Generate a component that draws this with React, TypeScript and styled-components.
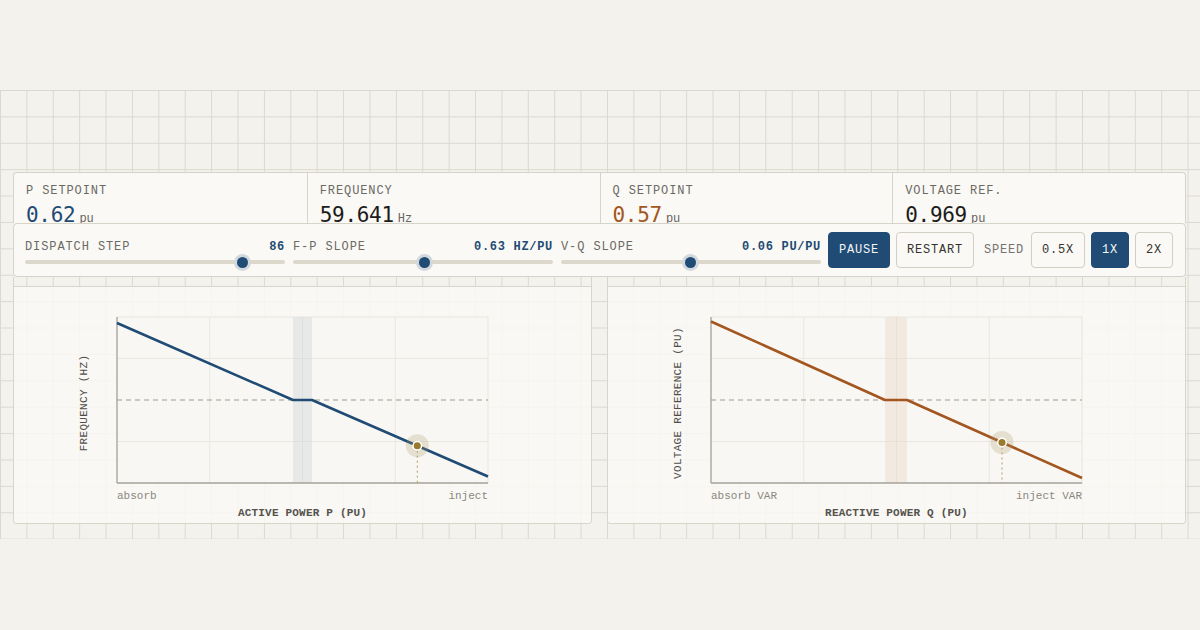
import styled, { createGlobalStyle } from "styled-components";

const ink = "#1f4b74";
const rust = "#a3561f";
const mono = `"Liberation Mono", "DejaVu Sans Mono", monospace`;
const monoHeavy = `"DejaVu Sans Mono", "Liberation Mono", monospace`;

const GlobalStyle = createGlobalStyle`
  html, body {
    margin: 0;
    background: #f3f2ed;
  }
  body {
    font-family: ${mono};
    color: #222;
  }
`;

type Tone = "p" | "q" | "plain";

const stats: { label: string; value: string; unit: string; tone: Tone }[] = [
  { label: "P SETPOINT", value: "0.62", unit: "pu", tone: "p" },
  { label: "FREQUENCY", value: "59.641", unit: "Hz", tone: "plain" },
  { label: "Q SETPOINT", value: "0.57", unit: "pu", tone: "q" },
  { label: "VOLTAGE REF.", value: "0.969", unit: "pu", tone: "plain" },
];

const sliders = [
  { label: "DISPATCH STEP", value: "86", pos: 0.86 },
  { label: "F-P SLOPE", value: "0.63 HZ/PU", pos: 0.508 },
  { label: "V-Q SLOPE", value: "0.06 PU/PU", pos: 0.496 },
];

const speeds = [
  { label: "0.5X", active: false },
  { label: "1X", active: true },
  { label: "2X", active: false },
];

// plot frame inside each chart card
const X0 = 103;
const X1 = 474;
const Y0 = 30;
const Y1 = 196;

type Pt = [number, number];

type ChartProps = {
  color: string;
  bandFill: string;
  band: [number, number];
  pts: Pt[];
  op: Pt;
  yLabel: string;
  xLabel: string;
  lo: string;
  hi: string;
};

function DroopChart({ color, bandFill, band, pts, op, yLabel, xLabel, lo, hi }: ChartProps) {
  const w = X1 - X0;
  const h = Y1 - Y0;
  const mid = Y0 + h / 2;
  return (
    <svg width="577" height="236" viewBox="0 0 577 236">
      <rect x={X0} y={Y0} width={w} height={h} fill="#f8f7f3" stroke="#e8e6df" />
      {[1, 2, 3].map((k) => (
        <line key={"v" + k} x1={X0 + (w * k) / 4} x2={X0 + (w * k) / 4} y1={Y0} y2={Y1} stroke="#e9e7e0" />
      ))}
      {[1, 3].map((k) => (
        <line key={"h" + k} x1={X0} x2={X1} y1={Y0 + (h * k) / 4} y2={Y0 + (h * k) / 4} stroke="#e9e7e0" />
      ))}
      <rect x={band[0]} y={Y0} width={band[1] - band[0]} height={h} fill={bandFill} />
      <line x1={X0} x2={X1} y1={mid} y2={mid} stroke="#9d998f" strokeDasharray="5 4" />
      <line x1={X0} x2={X0} y1={Y0} y2={Y1} stroke="#a9a59b" strokeWidth="1.3" />
      <line x1={X0} x2={X1} y1={Y1} y2={Y1} stroke="#a9a59b" strokeWidth="1.3" />
      <polyline
        points={pts.map((p) => p.join(",")).join(" ")}
        fill="none"
        stroke={color}
        strokeWidth="2.6"
        strokeLinejoin="round"
      />
      <line x1={op[0]} x2={op[0]} y1={op[1] + 5} y2={Y1} stroke="#b39d5f" strokeDasharray="2 3" />
      <circle cx={op[0]} cy={op[1]} r="11.5" fill="rgba(170, 150, 105, 0.25)" />
      <circle cx={op[0]} cy={op[1]} r="4.3" fill="#9a7a2c" stroke="#fff" strokeWidth="1.5" />
      <text
        transform={`translate(70 ${mid + 3}) rotate(-90)`}
        textAnchor="middle"
        dominantBaseline="central"
        fontFamily={mono}
        fontSize="11"
        letterSpacing="0.3"
        fill="#4f4d48"
      >
        {yLabel}
      </text>
      <text x={X0} y="212" fontFamily={mono} fontSize="11" fill="#8a877f">
        {lo}
      </text>
      <text x={X1} y="212" textAnchor="end" fontFamily={mono} fontSize="11" fill="#8a877f">
        {hi}
      </text>
      <text
        x={(X0 + X1) / 2}
        y="228.5"
        textAnchor="middle"
        fontFamily={mono}
        fontSize="11"
        fontWeight="bold"
        letterSpacing="0.2"
        fill="#55534d"
      >
        {xLabel}
      </text>
    </svg>
  );
}

export default function App() {
  return (
    <>
      <GlobalStyle />
      <Board>
        <StatStrip>
          {stats.map((s) => (
            <StatCell key={s.label}>
              <SmallCaps>{s.label}</SmallCaps>
              <Reading>
                <Value $tone={s.tone}>{s.value}</Value>
                <Unit>{s.unit}</Unit>
              </Reading>
            </StatCell>
          ))}
        </StatStrip>

        <ControlBar>
          <SliderSet>
            {sliders.map((s) => (
              <SliderGroup key={s.label}>
                <SliderHead>
                  <SmallCaps>{s.label}</SmallCaps>
                  <SliderValue>{s.value}</SliderValue>
                </SliderHead>
                <TrackWrap>
                  <Track />
                  <Thumb style={{ left: 8 + s.pos * 244 - 5.5 }} />
                </TrackWrap>
              </SliderGroup>
            ))}
          </SliderSet>
          <Button $active>PAUSE</Button>
          <Button>RESTART</Button>
          <SpeedLabel>SPEED</SpeedLabel>
          {speeds.map((s) => (
            <Button key={s.label} $active={s.active}>
              {s.label}
            </Button>
          ))}
        </ControlBar>

        <ChartRow>
          <ChartCard>
            <CardHead />
            <CardBody>
              <DroopChart
                color={ink}
                bandFill="rgba(210, 214, 219, 0.45)"
                band={[279, 298]}
                pts={[
                  [X0, 36],
                  [279, 113],
                  [298, 113],
                  [X1, 189.5],
                ]}
                op={[403.3, 158.7]}
                yLabel="FREQUENCY (HZ)"
                xLabel="ACTIVE POWER P (PU)"
                lo="absorb"
                hi="inject"
              />
            </CardBody>
          </ChartCard>
          <ChartCard>
            <CardHead />
            <CardBody>
              <DroopChart
                color={rust}
                bandFill="rgba(232, 212, 198, 0.4)"
                band={[277, 299]}
                pts={[
                  [X0, 34.5],
                  [277, 113],
                  [299, 113],
                  [X1, 191],
                ]}
                op={[394, 155.5]}
                yLabel="VOLTAGE REFERENCE (PU)"
                xLabel="REACTIVE POWER Q (PU)"
                lo="absorb VAR"
                hi="inject VAR"
              />
            </CardBody>
          </ChartCard>
        </ChartRow>
      </Board>
    </>
  );
}

const Board = styled.main`
  margin-top: 90px;
  height: 449px;
  box-sizing: border-box;
  padding: 82px 14px 0 13px;
  background-color: #f3f2ed;
  background-image: linear-gradient(to right, #dbd8cf 1px, transparent 1px),
    linear-gradient(to bottom, #dbd8cf 1px, transparent 1px);
  background-size: 26.4px 26.4px;
`;

const StatStrip = styled.section`
  display: grid;
  grid-template-columns: repeat(4, 1fr);
  height: 51px;
  box-sizing: border-box;
  overflow: hidden;
  background: #faf9f5;
  border: 1px solid #d6d3c9;
  border-bottom: none;
  border-radius: 4px 4px 0 0;
`;

const StatCell = styled.div`
  padding: 11px 12px 0;
  & + & {
    border-left: 1px solid #d6d3c9;
  }
`;

const SmallCaps = styled.span`
  display: block;
  font-size: 12px;
  line-height: 14px;
  letter-spacing: 0.9px;
  color: #6b6964;
  white-space: nowrap;
`;

const Reading = styled.div`
  display: flex;
  align-items: baseline;
  gap: 4px;
  margin-top: 10px;
`;

const Value = styled.span<{ $tone: Tone }>`
  font-family: ${monoHeavy};
  font-size: 21px;
  line-height: 14px;
  letter-spacing: -0.3px;
  color: ${(p) => (p.$tone === "p" ? ink : p.$tone === "q" ? rust : "#1c1c1a")};
`;

const Unit = styled.span`
  font-size: 12px;
  line-height: 14px;
  color: #66645f;
`;

const ControlBar = styled.section`
  display: flex;
  align-items: center;
  gap: 6px;
  height: 54px;
  box-sizing: border-box;
  padding: 0 13px 0 11px;
  background: #faf9f5;
  border: 1px solid #d6d3c9;
  border-radius: 4px;
`;

const SliderSet = styled.div`
  display: flex;
  gap: 8px;
  margin-right: 1px;
`;

const SliderGroup = styled.div`
  width: 260px;
  padding-top: 10px;
`;

const SliderHead = styled.div`
  display: flex;
  justify-content: space-between;
  align-items: center;
`;

const SliderValue = styled.span`
  font-size: 12px;
  line-height: 14px;
  letter-spacing: 0.7px;
  font-weight: bold;
  color: ${ink};
`;

const TrackWrap = styled.div`
  position: relative;
  height: 17px;
  display: flex;
  align-items: center;
`;

const Track = styled.div`
  width: 100%;
  height: 4px;
  border-radius: 2px;
  background: #dcd8cb;
`;

const Thumb = styled.span`
  position: absolute;
  top: 3px;
  width: 11px;
  height: 11px;
  border-radius: 50%;
  background: ${ink};
  box-shadow: 0 0 0 3px #d2d8de;
`;

const Button = styled.button<{ $active?: boolean }>`
  height: 36px;
  padding: 0 10px;
  font-family: ${mono};
  font-size: 12px;
  letter-spacing: 0.8px;
  border-radius: 4px;
  border: 1px solid ${(p) => (p.$active ? ink : "#d2cec3")};
  background: ${(p) => (p.$active ? ink : "#faf9f5")};
  color: ${(p) => (p.$active ? "#f4f6f8" : "#34332f")};
  cursor: pointer;
`;

const SpeedLabel = styled.span`
  font-size: 12px;
  letter-spacing: 0.8px;
  color: #75736d;
  margin: 0 1px 0 4px;
`;

const ChartRow = styled.section`
  display: grid;
  grid-template-columns: 1fr 1fr;
  gap: 15px;
`;

const ChartCard = styled.article`
  border: 1px solid #d8d5cb;
  border-top: none;
  border-radius: 0 0 4px 4px;
  overflow: hidden;
`;

const CardHead = styled.div`
  height: 9px;
  border-bottom: 1px solid #d8d5cb;
`;

const CardBody = styled.div`
  height: 236px;
  background: rgba(250, 249, 245, 0.84);

  svg {
    display: block;
  }
`;
